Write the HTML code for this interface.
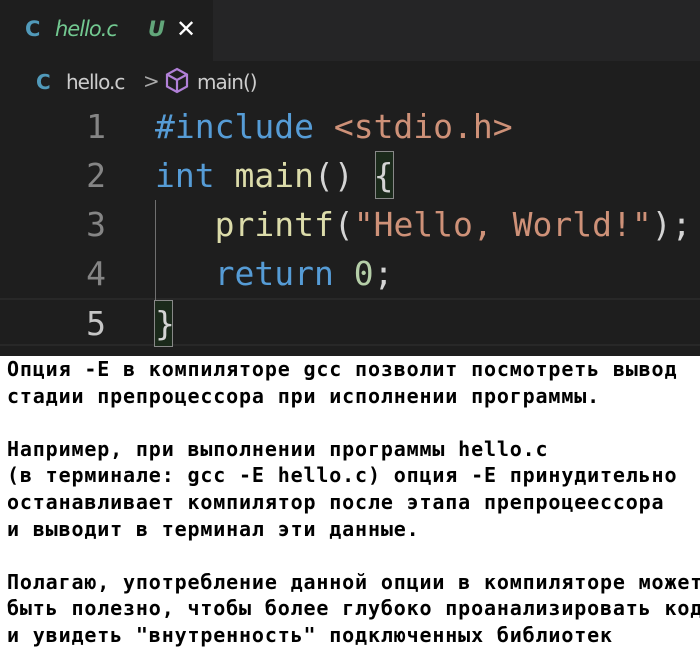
<!DOCTYPE html>
<html><head><meta charset="utf-8"><style>
body{margin:0;width:700px;height:659px;background:#fff;overflow:hidden;position:relative}
.dark{position:absolute;left:0;top:0;width:700px;height:356px;background:#1e1e1e}
.tabbar{position:absolute;left:0;top:0;width:700px;height:61px;background:#252526}
.tab{position:absolute;left:0;top:0;width:213px;height:61px;background:#1e1e1e;font-family:"DejaVu Sans","Liberation Sans",sans-serif;font-size:21px}
.abs{position:absolute;white-space:pre}
.code{font-family:"DejaVu Sans Mono","Liberation Mono",monospace;font-size:33px;line-height:49px}
.ln{position:absolute;left:60px;width:46px;text-align:right;color:#858585}
.kw{color:#569cd6}.st{color:#ce9178}.fn{color:#dcdcaa}.nm{color:#b5cea8}.tx{color:#d4d4d4}
.txt{position:absolute;left:7px;top:356px;font-family:"DejaVu Sans Mono","Liberation Mono",monospace;font-weight:bold;font-size:20px;letter-spacing:0.85px;line-height:26.6px;color:#000;white-space:pre}
</style></head><body>
<div class="dark"></div>
<div class="tabbar"><div class="tab">
<span class="abs" style="left:25px;top:17px;color:#519aba;font-weight:bold">C</span>
<span class="abs" style="left:55px;top:17px;color:#73c991;font-style:italic;letter-spacing:-1px">hello.c</span>
<span class="abs" style="left:148px;top:17px;color:#73c991;font-style:italic;font-weight:bold;opacity:.8">U</span>
<span class="abs" style="left:176px;top:15px;color:#fff;font-size:24px">✕</span>
</div></div>
<div style="font-family:'DejaVu Sans','Liberation Sans',sans-serif;font-size:20px;color:#cccccc">
<span class="abs" style="left:36px;top:70px;color:#519aba;font-weight:bold">C</span>
<span class="abs" style="left:66px;top:70px;letter-spacing:-1px">hello.c</span>
<span class="abs" style="left:143px;top:69px;color:#aaa">&gt;</span>
<svg class="abs" style="left:164px;top:67px" width="26" height="28" viewBox="0 0 26 28"><g fill="none" stroke="#b180d7" stroke-width="2.2"><path d="M13 2 L23 7.5 L23 19.5 L13 25 L3 19.5 L3 7.5 Z"/><path d="M3 7.5 L13 13 L23 7.5 M13 13 L13 25"/></g></svg>
<span class="abs" style="left:197px;top:70px;letter-spacing:-1px">main()</span>
</div>
<div style="position:absolute;left:0;top:298px;width:700px;height:48px;border-top:2px solid #282828;border-bottom:2px solid #282828;box-sizing:border-box"></div>
<div style="position:absolute;left:155px;top:200px;width:1px;height:100px;background:#707070"></div>
<div style="position:absolute;left:375px;top:151px;width:19px;height:48px;border:1px solid #888;background:#1b2a1b;box-sizing:border-box"></div>
<div style="position:absolute;left:154px;top:300px;width:19px;height:47px;border:1px solid #888;background:#1b2a1b;box-sizing:border-box"></div>
<div class="code" style="position:absolute;left:0;top:102px;width:700px">
<div class="ln" style="top:0">1</div><div class="ln" style="top:49px">2</div><div class="ln" style="top:98px">3</div><div class="ln" style="top:147px">4</div><div class="ln" style="top:197px;color:#c6c6c6">5</div>
<div class="abs" style="left:155px;top:0"><span class="kw">#include</span> <span class="st">&lt;stdio.h&gt;</span></div>
<div class="abs" style="left:155px;top:49px"><span class="kw">int</span> <span class="fn">main</span><span class="tx">() {</span></div>
<div class="abs" style="left:155px;top:98px"><span class="tx">   </span><span class="fn">printf</span><span class="tx">(</span><span class="st">"Hello, World!"</span><span class="tx">);</span></div>
<div class="abs" style="left:155px;top:147px"><span class="tx">   </span><span class="kw">return</span> <span class="nm">0</span><span class="tx">;</span></div>
<div class="abs" style="left:155px;top:197px"><span class="tx">}</span></div>
</div>
<div class="txt">Опция -Е в компиляторе gcc позволит посмотреть вывод
стадии препроцессора при исполнении программы.

Например, при выполнении программы hello.c
(в терминале: gcc -E hello.c) опция -Е принудительно
останавливает компилятор после этапа препроцеессора
и выводит в терминал эти данные.

Полагаю, употребление данной опции в компиляторе может
быть полезно, чтобы более глубоко проанализировать код
и увидеть "внутренность" подключенных библиотек</div>
</body></html>
